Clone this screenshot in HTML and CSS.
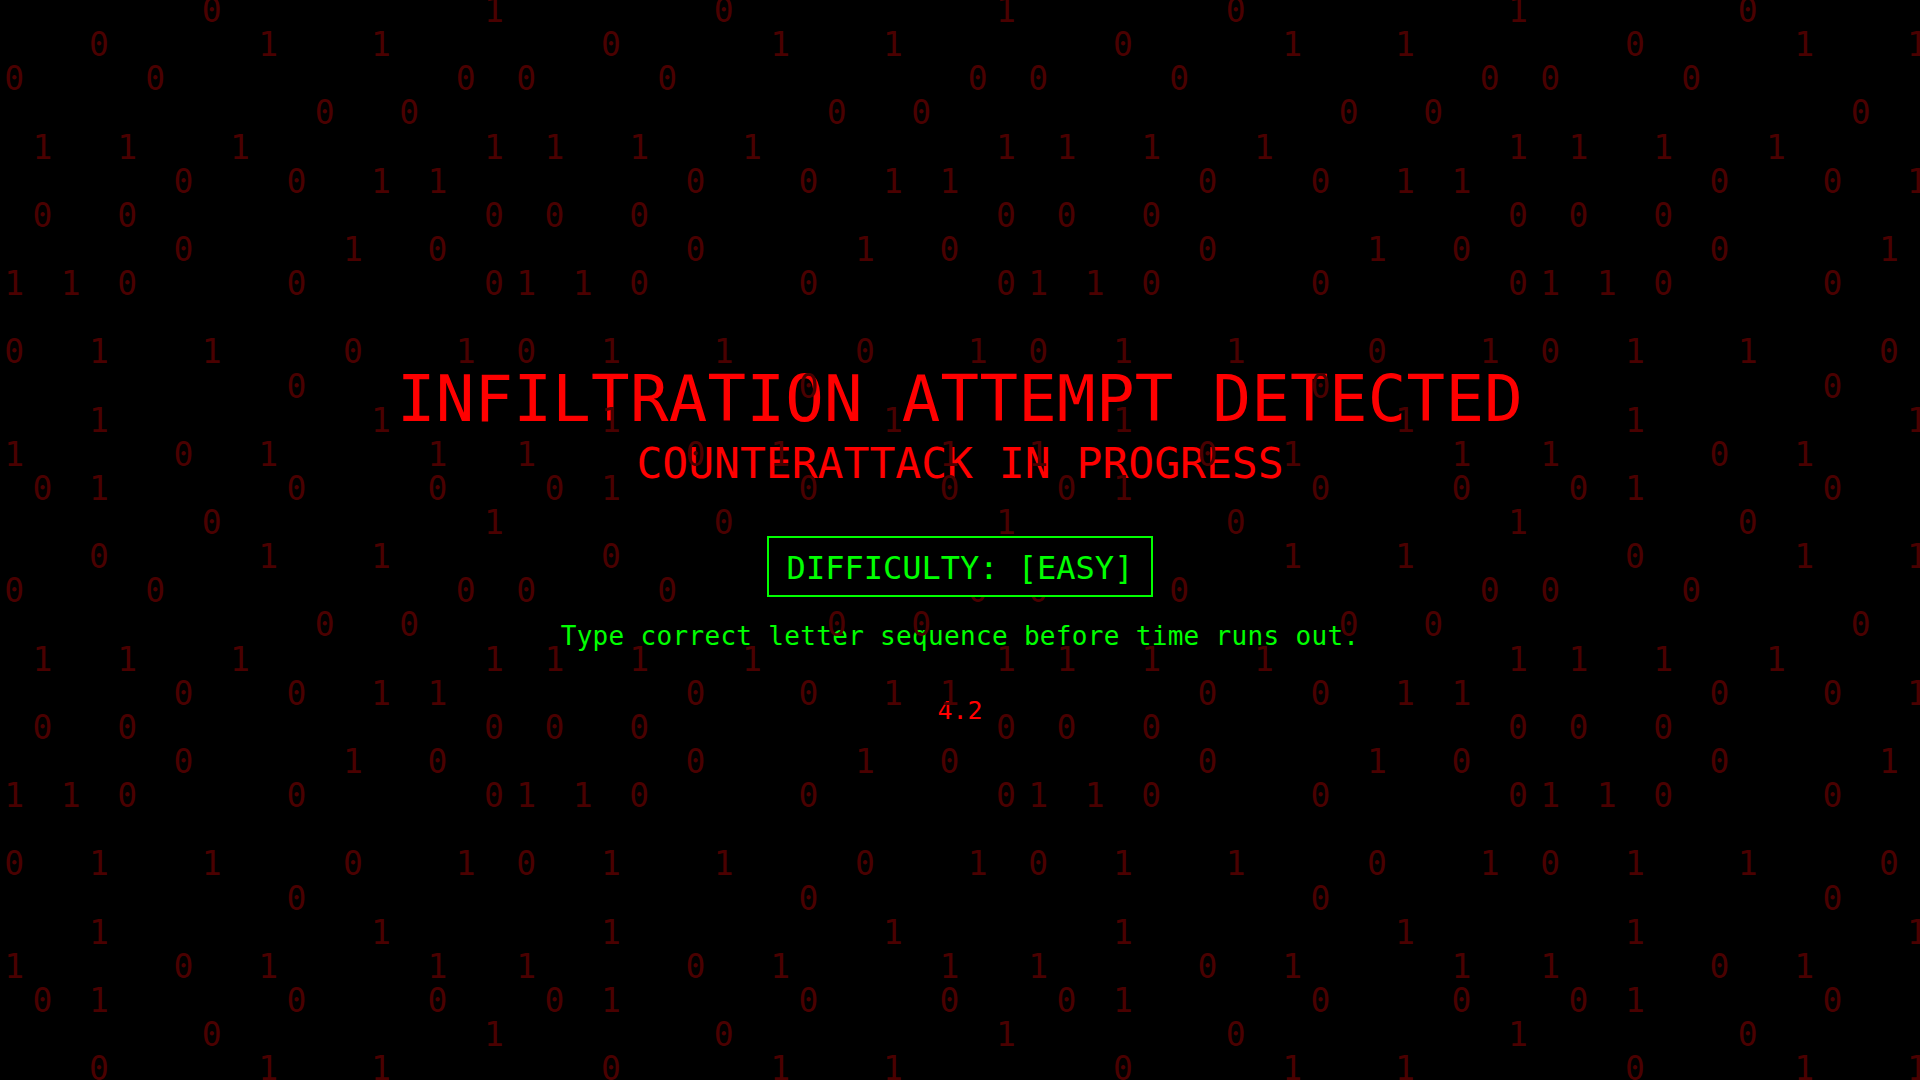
FILE: index.html
```html
<!DOCTYPE html>
<html lang="en">
<head>
<meta charset="utf-8">
<title>Infiltration Attempt Detected</title>
<link rel="stylesheet" href="styles.css">
</head>
<body>
<div class="screen">
  <main class="content">
    <h1 class="title">INFILTRATION ATTEMPT DETECTED</h1>
    <h2 class="subtitle">COUNTERATTACK IN PROGRESS</h2>
    <div class="difficulty">DIFFICULTY: [EASY]</div>
    <p class="instructions">Type correct letter sequence before time runs out.</p>
    <div class="timer">4.2</div>
  </main>
  <div class="rain" id="rain" aria-hidden="true"></div>
</div>
<script src="script.js"></script>
</body>
</html>
```
FILE: styles.css
```css
html, body {
  margin: 0;
  padding: 0;
  background: #000;
}

.screen {
  position: relative;
  width: 100vw;
  height: 100vh;
  overflow: hidden;
  background: #000;
  font-family: "DejaVu Sans Mono", "Liberation Mono", monospace;
}

.content {
  display: flex;
  flex-direction: column;
  align-items: center;
  padding-top: 367px;
}

.title {
  margin: 0;
  font-size: 64px;
  line-height: 1;
  font-weight: normal;
  color: #ff0000;
  letter-spacing: 0.3px;
  white-space: nowrap;
}

.subtitle {
  margin: 11px 0 0;
  font-size: 43px;
  line-height: 1;
  font-weight: normal;
  color: #ff0000;
  white-space: nowrap;
}

.difficulty {
  position: relative;
  z-index: 2;
  margin-top: 51px;
  padding: 14px 17.6px 11px;
  border: 2px solid #00ff00;
  background: #000;
  color: #00ff00;
  font-size: 32px;
  line-height: 1;
  white-space: nowrap;
}

.instructions {
  margin: 26px 0 0;
  font-size: 26px;
  line-height: 1;
  letter-spacing: 0.32px;
  color: #00ff00;
  white-space: nowrap;
}

.timer {
  margin-top: 49px;
  font-size: 25px;
  line-height: 1;
  color: #ff0000;
}

.rain {
  position: absolute;
  top: -6px;
  left: 0;
  z-index: 1;
  display: grid;
  grid-template-columns: repeat(4, 512px);
  grid-auto-rows: 512px;
  pointer-events: none;
}

.tile {
  box-sizing: border-box;
  width: 512px;
  height: 512px;
  padding-left: 4.27px;
  overflow: hidden;
  white-space: pre;
  font-family: "DejaVu Sans Mono", monospace;
  font-size: 33px;
  line-height: 34.1333px;
  letter-spacing: 8.352px;
  color: #4a0000;
}
```
FILE: script.js
```js
(function () {
  var rows = [
    ".......0.........1",
    "...0.....1...1....",
    "0....0..........0.",
    "...........0..0...",
    ".1..1...1........1",
    "......0...0..1.1..",
    ".0..0............0",
    "......0.....1..0..",
    "1.1.0.....0......0",
    "..................",
    "0..1...1....0...1.",
    "..........0.......",
    "...1.........1....",
    "1.....0..1.....1..",
    ".0.1......0....0.."
  ];
  var text = rows.map(function (r) { return r.replace(/\./g, " "); }).join("\n");
  var rain = document.getElementById("rain");
  for (var i = 0; i < 12; i++) {
    var tile = document.createElement("div");
    tile.className = "tile";
    tile.textContent = text;
    rain.appendChild(tile);
  }
})();
```
